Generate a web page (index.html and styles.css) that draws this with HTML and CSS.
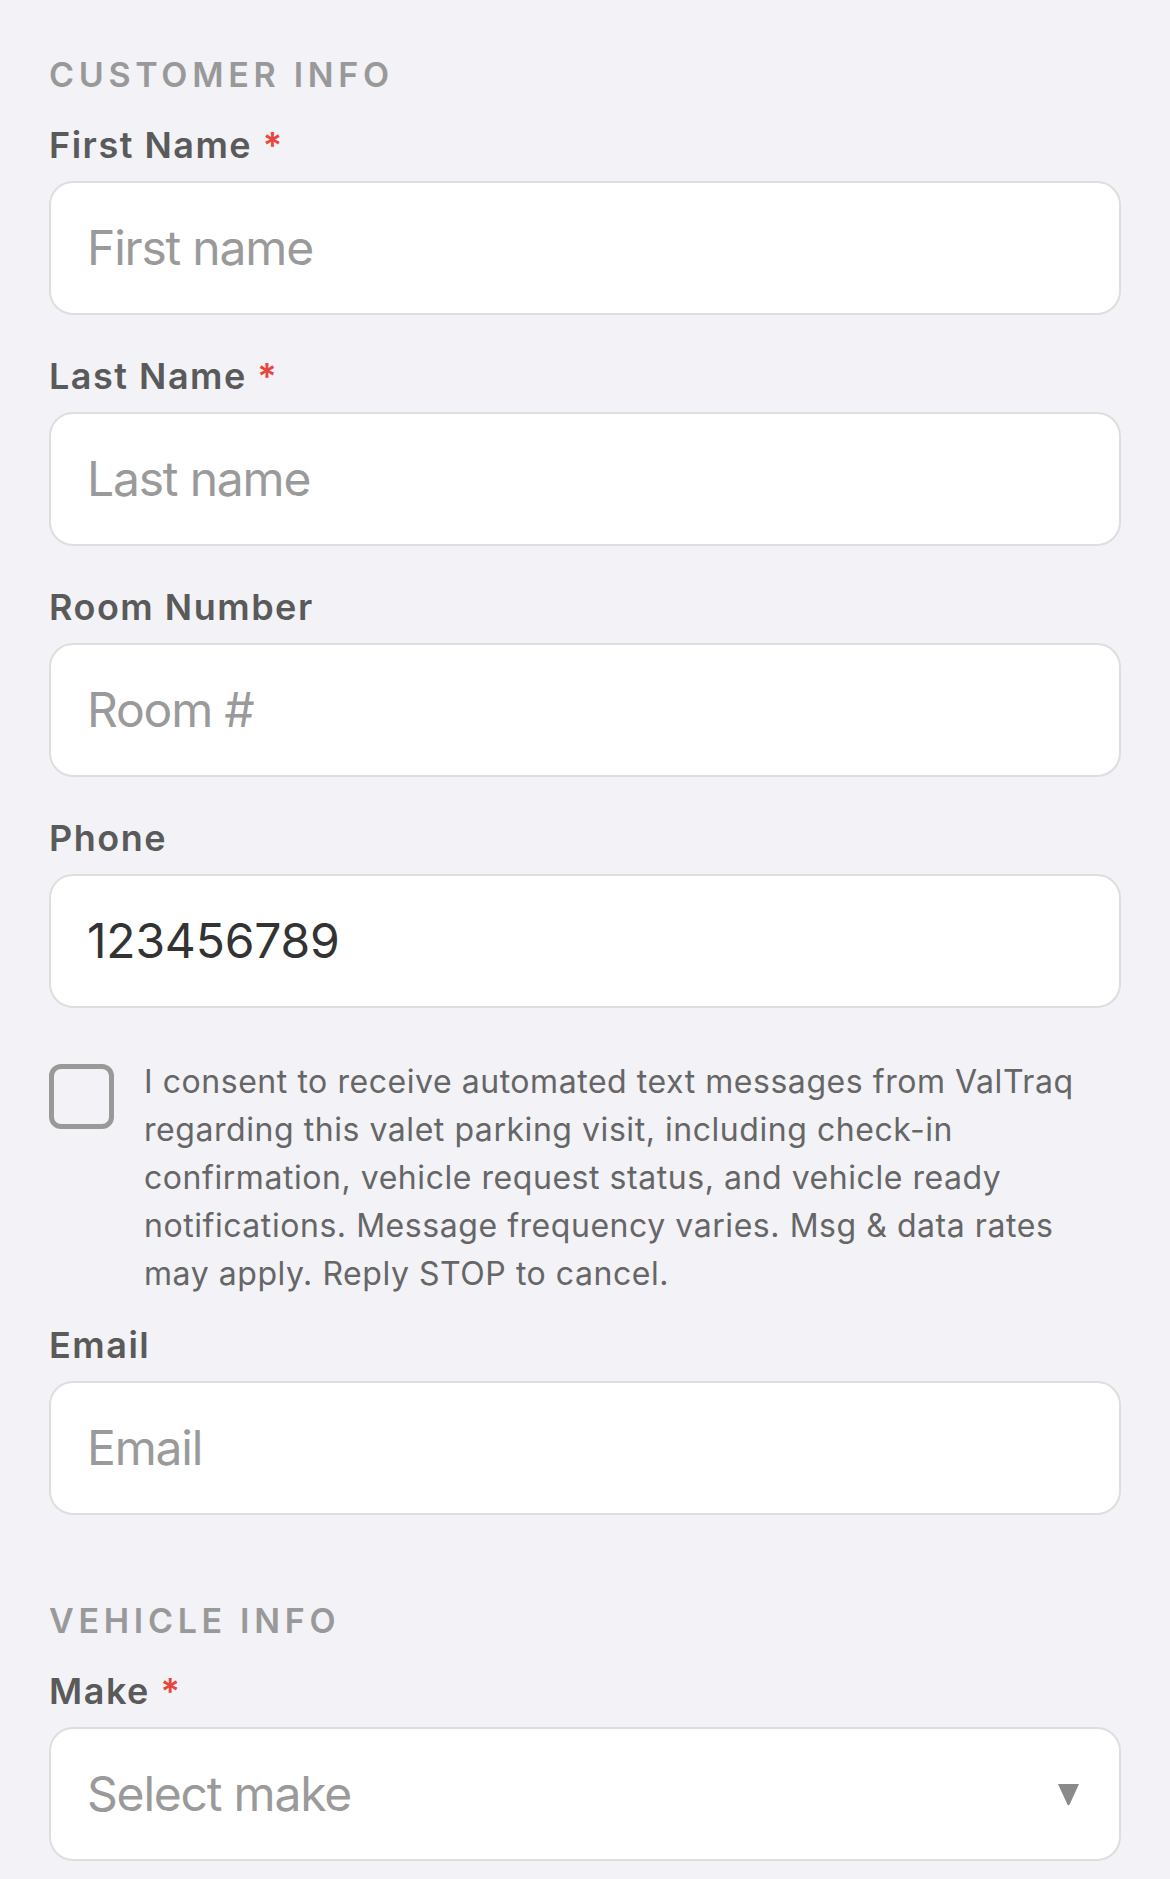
FILE: index.html
```html
<!DOCTYPE html>
<html lang="en">
<head>
<meta charset="utf-8">
<title>Customer Info</title>
<link rel="stylesheet" href="styles.css">
</head>
<body>
<main class="form">
  <section class="section">
    <h2 class="section-title">Customer Info</h2>
    <div class="field">
      <label class="label">First Name <span class="req">*</span></label>
      <div class="input placeholder">First name</div>
    </div>
    <div class="field">
      <label class="label">Last Name <span class="req">*</span></label>
      <div class="input placeholder">Last name</div>
    </div>
    <div class="field">
      <label class="label">Room Number</label>
      <div class="input placeholder">Room #</div>
    </div>
    <div class="field">
      <label class="label">Phone</label>
      <div class="input value">123456789</div>
    </div>
    <div class="consent">
      <span class="checkbox"></span>
      <p class="consent-text">I consent to receive automated text messages from ValTraq regarding this valet parking visit, including check-in confirmation, vehicle request status, and vehicle ready notifications. Message frequency varies. Msg &amp; data rates may apply. Reply STOP to cancel.</p>
    </div>
    <div class="field">
      <label class="label">Email</label>
      <div class="input placeholder">Email</div>
    </div>
  </section>
  <section class="section section-vehicle">
    <h2 class="section-title">Vehicle Info</h2>
    <div class="field">
      <label class="label">Make <span class="req">*</span></label>
      <div class="input select placeholder">
        <span>Select make</span>
        <svg class="caret" width="23" height="23" viewBox="0 0 23 23"><path d="M1 1 H22 L12.6 21.6 Q11.5 23 10.4 21.6 Z" fill="#8a8a8a"/></svg>
      </div>
    </div>
  </section>
</main>
</body>
</html>
```
FILE: styles.css
```css
* { box-sizing: border-box; }
html, body {
  margin: 0;
  padding: 0;
  background: #f2f2f7;
}
body {
  font-family: Inter, "Noto Sans", "Liberation Sans", sans-serif;
  color: #333;
}
.form {
  padding: 55px 49px 0 49px;
}
.section {
  display: flex;
  flex-direction: column;
}
.section-title {
  margin: 0 0 28px 0;
  font-size: 34px;
  line-height: 40px;
  font-weight: 600;
  letter-spacing: 4.7px;
  text-transform: uppercase;
  color: #999999;
}
.section-vehicle {
  margin-top: 47px;
}
.field {
  display: flex;
  flex-direction: column;
  margin-bottom: 39px;
}
.label {
  display: block;
  font-size: 36px;
  line-height: 44px;
  font-weight: 600;
  letter-spacing: 1.5px;
  color: #5a5a5a;
  margin-bottom: 14px;
}
.req {
  color: #e8453c;
}
.input {
  height: 134px;
  background: #ffffff;
  border: 2px solid #dedede;
  border-radius: 24px;
  padding: 0 36px 0 36px;
  display: flex;
  align-items: center;
  font-size: 48px;
  line-height: 58px;
}
.placeholder {
  color: #9a9a9a;
  letter-spacing: -1.2px;
}
.value {
  color: #333333;
  letter-spacing: -0.2px;
}
.select {
  justify-content: space-between;
  padding-right: 39px;
}
.caret { display: block; }
.consent {
  display: flex;
  align-items: flex-start;
  gap: 30px;
  margin: 11px 0 25px 0;
}
.checkbox {
  flex: none;
  width: 65px;
  height: 65px;
  margin-top: 6px;
  border: 5px solid #999999;
  border-radius: 12px;
}
.consent-text {
  margin: 0;
  font-size: 32px;
  line-height: 48px;
  letter-spacing: 0.55px;
  color: #666666;
}
```
